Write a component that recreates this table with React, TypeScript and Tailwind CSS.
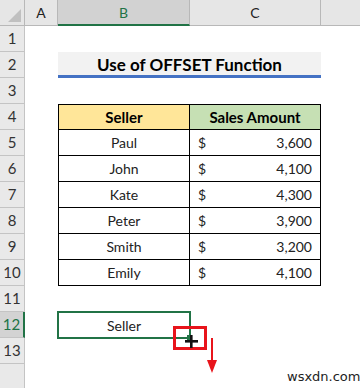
import React from 'react';

const sales = [
  { name: 'Paul', amount: '3,600' },
  { name: 'John', amount: '4,100' },
  { name: 'Kate', amount: '4,300' },
  { name: 'Peter', amount: '3,900' },
  { name: 'Smith', amount: '3,200' },
  { name: 'Emily', amount: '4,100' },
];

const rowHead = 'flex items-center justify-center border-b border-r border-[#c4c4c4] bg-[#e9e9e9] text-[15px] text-[#333]';

function RowHeader({ n, active }: { n: number; active?: boolean }) {
  if (active) {
    return (
      <div className="flex items-center justify-center border-b border-r-2 border-b-[#c4c4c4] border-r-[#217346] bg-[#d3d3d3] text-[15px] text-[#217346]">
        {n}
      </div>
    );
  }
  return <div className={rowHead}>{n}</div>;
}

export default function App() {
  return (
    <div
      className="relative h-[388px] w-[360px] overflow-hidden bg-white"
      style={{ fontFamily: 'Lato, "Liberation Sans", sans-serif' }}
    >
      <div className="grid grid-cols-[25px_33px_132px_131px_39px] auto-rows-[26px]">
        {/* column headers */}
        <div className="relative border-b border-r border-[#b8b8b8] bg-[#e6e6e6]">
          <div className="absolute bottom-[3px] right-[3px] h-0 w-0 border-l-[12px] border-t-[12px] border-l-transparent border-t-transparent border-b-[0px] border-r-[0px]" />
          <svg className="absolute bottom-[3px] right-[3px]" width="13" height="13" viewBox="0 0 13 13">
            <polygon points="13,0 13,13 0,13" fill="#c0c0c0" />
          </svg>
        </div>
        <div className="flex items-center justify-center border-b border-r border-[#b8b8b8] bg-[#e6e6e6] text-[14px] text-[#222]">A</div>
        <div className="flex items-center justify-center border-b-2 border-r border-b-[#217346] border-r-[#b8b8b8] bg-[#d2d2d2] text-[14px] text-[#217346]">B</div>
        <div className="flex items-center justify-center border-b border-r border-[#b8b8b8] bg-[#e6e6e6] text-[14px] text-[#222]">C</div>
        <div className="border-b border-[#b8b8b8] bg-[#e6e6e6]" />

        {/* row 1 */}
        <RowHeader n={1} />
        <div className="col-span-4" />

        {/* row 2 title */}
        <RowHeader n={2} />
        <div />
        <div className="col-span-2 flex items-center justify-center border-b-[3px] border-[#4472c4] bg-[#f2f2f2] pt-[2px] text-[17px] font-bold text-black">
          Use of OFFSET Function
        </div>
        <div />

        {/* row 3 */}
        <RowHeader n={3} />
        <div className="col-span-4" />

        {/* row 4 header */}
        <RowHeader n={4} />
        <div />
        <div className="flex items-center justify-center border border-black bg-[#ffe699] text-[15px] font-bold text-black">Seller</div>
        <div className="flex items-center justify-center border-y border-r border-black bg-[#c6e0b4] text-[15px] font-bold text-black">Sales Amount</div>
        <div />

        {sales.map((s, i) => (
          <React.Fragment key={s.name}>
            <RowHeader n={i + 5} />
            <div />
            <div className="flex items-center justify-center border-x border-b border-black text-[14px] text-[#222]">{s.name}</div>
            <div className="flex items-center justify-between border-b border-r border-black px-[8px] text-[14px] text-[#222]">
              <span>$</span>
              <span>{s.amount}</span>
            </div>
            <div />
          </React.Fragment>
        ))}

        {/* row 11 */}
        <RowHeader n={11} />
        <div className="col-span-4" />

        {/* row 12 selected */}
        <RowHeader n={12} active />
        <div />
        <div className="-ml-px -mt-px flex h-[28px] w-[134px] items-center justify-center border-2 border-[#217346] text-[14px] text-[#222]">Seller</div>
        <div className="col-span-2" />

        <RowHeader n={13} />
        <div className="col-span-4" />

        <div className="border-r border-[#c4c4c4] bg-[#e9e9e9]" />
        <div className="col-span-4" />
      </div>

      {/* fill handle highlight */}
      <div className="absolute left-[173px] top-[326px] h-[24px] w-[34px] border-[3px] border-[#e8141b]" />
      <div className="absolute left-[187px] top-[335px] h-[5px] w-[5px] bg-[#217346]" />
      <svg className="absolute left-[184px] top-[334px]" width="15" height="15" viewBox="0 0 15 15">
        <rect x="6" y="1" width="2.6" height="13" fill="#111" />
        <rect x="1" y="6" width="13" height="2.6" fill="#111" />
      </svg>

      {/* red arrow */}
      <svg className="absolute left-[205px] top-[338px]" width="14" height="36" viewBox="0 0 14 36">
        <rect x="6" y="0" width="2" height="24" fill="#e8141b" />
        <polygon points="2,22 12,22 7,35" fill="#e8141b" />
      </svg>

      <div className="absolute left-[287px] top-[367px] text-[13px] text-[#222]" style={{ fontFamily: '"DejaVu Sans", sans-serif' }}>
        wsxdn.com
      </div>
    </div>
  );
}
